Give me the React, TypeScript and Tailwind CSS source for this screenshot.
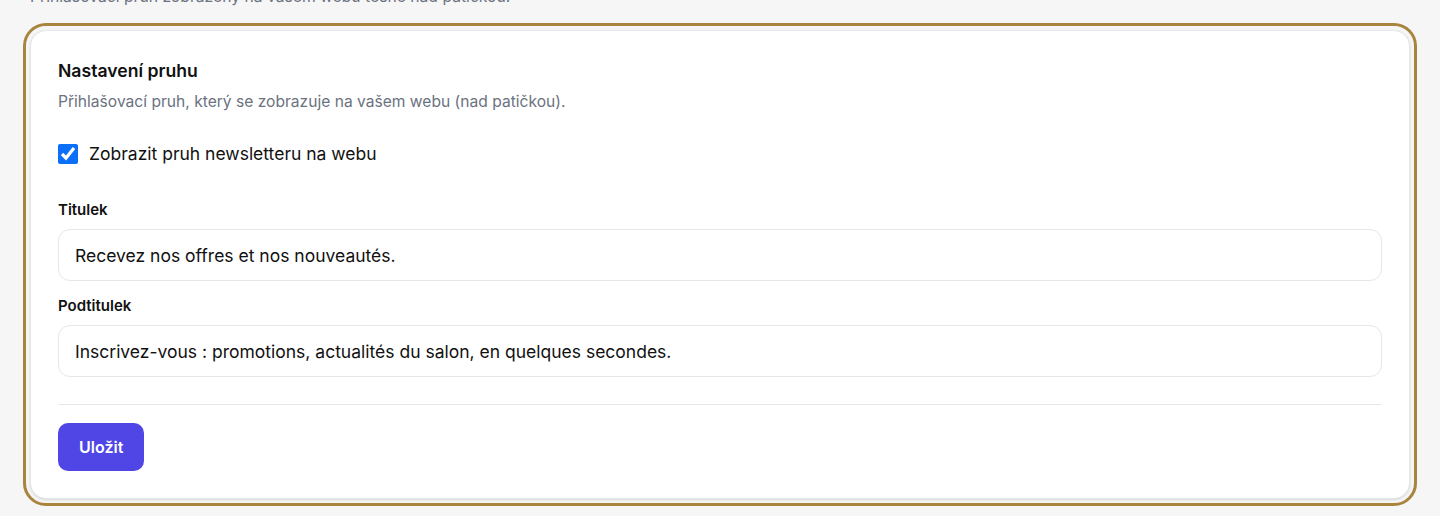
export default function App() {
  return (
    <div className="min-h-screen bg-[#f6f6f6] px-[30px] font-['Inter',sans-serif] text-[#111]">
      <p className="-mt-[13px] mb-[23px] text-[15.7px] leading-5 text-[#6b7280]">
        Přihlašovací pruh zobrazený na vašem webu těsně nad patičkou.
      </p>

      <section className="rounded-2xl border border-[#e5e7eb] bg-white px-[27px] pt-[28px] pb-[27px] outline-[3px] outline-offset-[4px] outline-[#a8843f] outline-solid shadow-sm">
        <h2 className="text-[17.6px] leading-6 font-semibold">Nastavení pruhu</h2>
        <p className="mt-[7px] text-[15.6px] leading-6 text-[#6b7280]">
          Přihlašovací pruh, který se zobrazuje na vašem webu (nad patičkou).
        </p>

        <label className="mt-[28px] flex items-center gap-[11px]">
          <input type="checkbox" defaultChecked className="h-5 w-5 accent-[#0b6ff7]" />
          <span className="text-[17.5px] leading-6">Zobrazit pruh newsletteru na webu</span>
        </label>

        <div className="mt-[34px]">
          <label className="block text-[15px] leading-5 font-semibold">Titulek</label>
          <input
            defaultValue="Recevez nos offres et nos nouveautés."
            className="mt-[9px] h-[52px] w-full rounded-xl border border-[#e5e7eb] px-4 text-[17.5px] text-[#111] outline-none"
          />
        </div>

        <div className="mt-[15px]">
          <label className="block text-[15px] leading-5 font-semibold">Podtitulek</label>
          <input
            defaultValue="Inscrivez-vous : promotions, actualités du salon, en quelques secondes."
            className="mt-[9px] h-[52px] w-full rounded-xl border border-[#e5e7eb] px-4 text-[17.5px] text-[#111] outline-none"
          />
        </div>

        <div className="mt-[27px] border-t border-[#e5e7eb] pt-[18px]">
          <button className="h-12 rounded-[10px] bg-[#4f46e5] px-[21px] text-[16px] font-semibold text-white">
            Uložit
          </button>
        </div>
      </section>
    </div>
  );
}
